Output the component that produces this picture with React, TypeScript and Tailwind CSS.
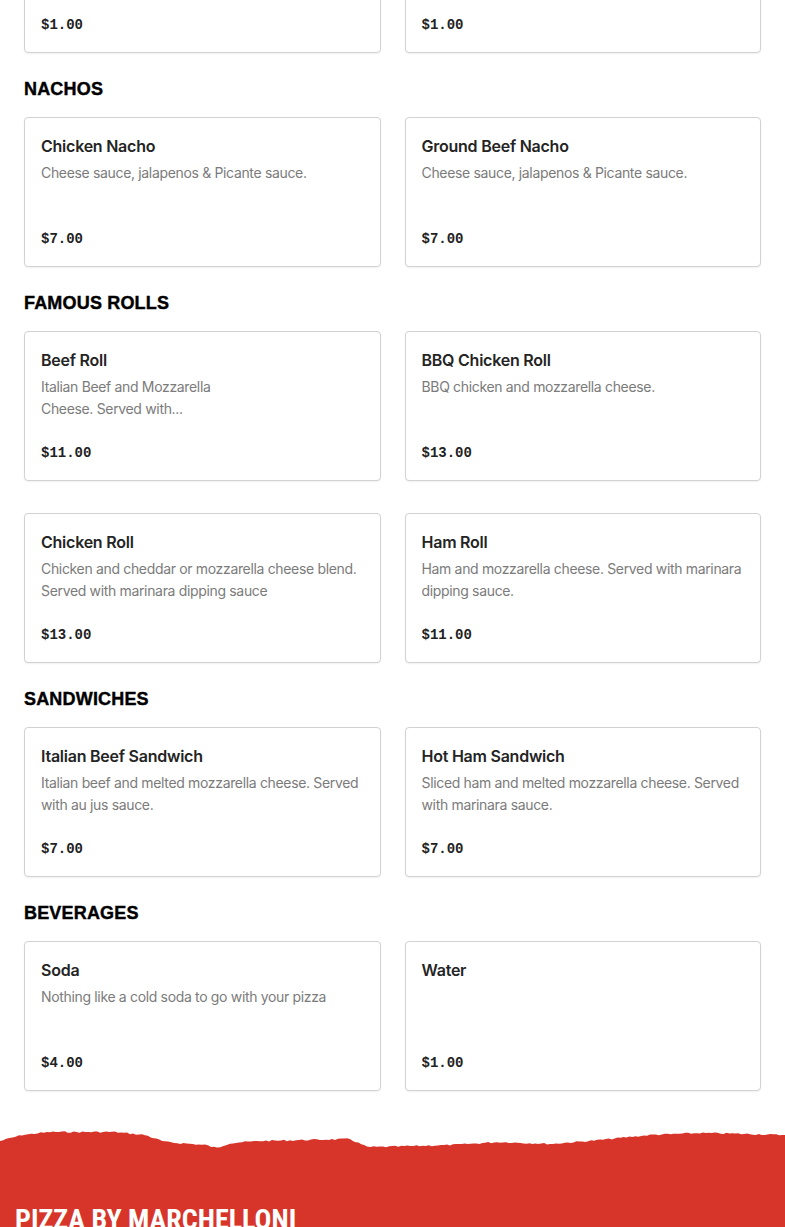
import React from "react";

type Item = { name: string; desc?: string; price: string; narrow?: boolean };
type Section = { title?: string; items: Item[] };

const sections: Section[] = [
  {
    items: [
      { name: "Ranch Dip", desc: "Side of ranch dressing.", price: "$1.00" },
      { name: "Marinara Dip", desc: "Side of marinara sauce.", price: "$1.00" },
    ],
  },
  {
    title: "NACHOS",
    items: [
      { name: "Chicken Nacho", desc: "Cheese sauce, jalapenos & Picante sauce.", price: "$7.00" },
      { name: "Ground Beef Nacho", desc: "Cheese sauce, jalapenos & Picante sauce.", price: "$7.00" },
    ],
  },
  {
    title: "FAMOUS ROLLS",
    items: [
      { name: "Beef Roll", desc: "Italian Beef and Mozzarella Cheese. Served with...", price: "$11.00", narrow: true },
      { name: "BBQ Chicken Roll", desc: "BBQ chicken and mozzarella cheese.", price: "$13.00" },
      { name: "Chicken Roll", desc: "Chicken and cheddar or mozzarella cheese blend. Served with marinara dipping sauce", price: "$13.00" },
      { name: "Ham Roll", desc: "Ham and mozzarella cheese. Served with marinara dipping sauce.", price: "$11.00" },
    ],
  },
  {
    title: "SANDWICHES",
    items: [
      { name: "Italian Beef Sandwich", desc: "Italian beef and melted mozzarella cheese. Served with au jus sauce.", price: "$7.00" },
      { name: "Hot Ham Sandwich", desc: "Sliced ham and melted mozzarella cheese. Served with marinara sauce.", price: "$7.00" },
    ],
  },
  {
    title: "BEVERAGES",
    items: [
      { name: "Soda", desc: "Nothing like a cold soda to go with your pizza", price: "$4.00" },
      { name: "Water", price: "$1.00" },
    ],
  },
];

// rough outline of the torn paper edge (x, y) in a 785x26 box
const edge: [number, number][] = [
  [0, 15], [22, 9], [50, 6], [115, 6], [145, 9], [165, 16], [205, 19], [217, 22],
  [230, 17], [260, 15], [350, 13], [367, 21], [380, 21], [450, 19], [500, 16],
  [550, 18], [600, 14], [650, 9], [700, 7], [750, 8], [785, 9],
];

function tornPath() {
  let seed = 7;
  const rnd = () => {
    seed = (seed * 9301 + 49297) % 233280;
    return seed / 233280;
  };
  const pts: string[] = [];
  for (let i = 0; i < edge.length - 1; i++) {
    const [x1, y1] = edge[i];
    const [x2, y2] = edge[i + 1];
    const steps = Math.max(2, Math.round((x2 - x1) / 3));
    for (let s = 0; s < steps; s++) {
      const t = s / steps;
      const x = x1 + (x2 - x1) * t;
      const y = y1 + (y2 - y1) * t + (rnd() - 0.5) * 1.6;
      pts.push(`${x.toFixed(1)},${y.toFixed(1)}`);
    }
  }
  pts.push("785,9");
  return `M0,26 L${pts.join(" L")} L785,26 Z`;
}

const torn = tornPath();

function Card({ item }: { item: Item }) {
  return (
    <div className="h-[150px] flex flex-col bg-white border border-[#d2d2d2] rounded-[4px] shadow-[0_1px_2px_rgba(0,0,0,0.06)] px-4 pt-4 pb-[18px]">
      <div className="text-[16px] leading-6 font-semibold tracking-[-0.015em] text-[#242424]">{item.name}</div>
      {item.desc && (
        <div
          className={`mt-1 text-[14px] leading-[22px] tracking-[-0.024em] text-[#7b7b7b] ${item.narrow ? "w-[180px]" : ""}`}
        >
          {item.desc}
        </div>
      )}
      <div className="mt-auto text-[14px] leading-5 font-bold text-[#222] font-['Liberation_Mono',monospace] translate-y-px">
        {item.price}
      </div>
    </div>
  );
}

export default function App() {
  return (
    <div className="h-[1227px] overflow-hidden bg-white font-['Inter',sans-serif]">
      <main className="px-6 pb-[35px]">
        {sections.map((sec, i) => (
          <section key={i} className={i === 0 ? "-mt-[97px]" : ""}>
            {sec.title && (
              <h2 className="mt-6 mb-4 leading-6 text-[18px] font-bold tracking-[0.01em] text-black [-webkit-text-stroke:0.4px_black] font-['Liberation_Sans',Arial,sans-serif]">
                {sec.title}
              </h2>
            )}
            <div className="grid grid-cols-2 gap-x-6 gap-y-8">
              {sec.items.map((it) => (
                <Card key={it.name} item={it} />
              ))}
            </div>
          </section>
        ))}
      </main>
      <footer>
        <svg width="785" height="26" viewBox="0 0 785 26" className="block -mb-px">
          <path d={torn} fill="#d8352a" />
        </svg>
        <div className="bg-[#d8352a] px-[15px] pt-[53px] pb-10">
          <div className="text-white text-[28px] leading-8 font-bold font-['Liberation_Sans_Narrow','Roboto_Condensed',Arial,sans-serif]">
            PIZZA BY MARCHELLONI
          </div>
        </div>
      </footer>
    </div>
  );
}
